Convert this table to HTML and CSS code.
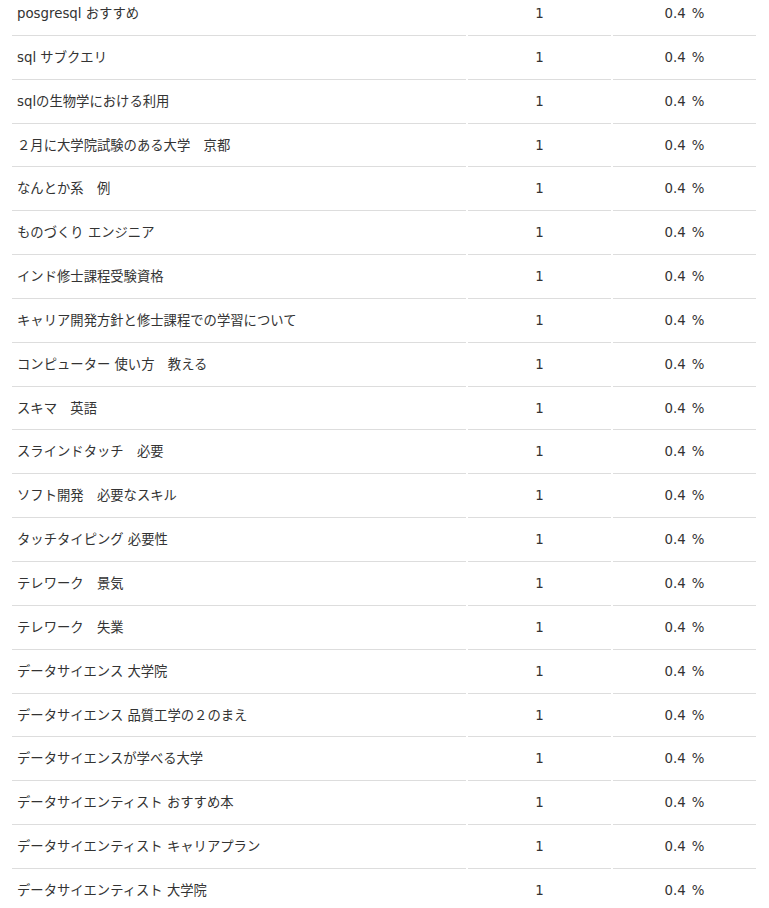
FILE: index.html
```html
<!DOCTYPE html>
<html lang="ja">
<head>
<meta charset="utf-8">
<link rel="stylesheet" href="styles.css">
</head>
<body>
<table class="ranking">
<tbody>
<tr><td class="kw">posgresql おすすめ</td><td class="num">1</td><td class="pct">0.4 %</td></tr>
<tr><td class="kw">sql サブクエリ</td><td class="num">1</td><td class="pct">0.4 %</td></tr>
<tr><td class="kw">sqlの生物学における利用</td><td class="num">1</td><td class="pct">0.4 %</td></tr>
<tr><td class="kw">２月に大学院試験のある大学　京都</td><td class="num">1</td><td class="pct">0.4 %</td></tr>
<tr><td class="kw">なんとか系　例</td><td class="num">1</td><td class="pct">0.4 %</td></tr>
<tr><td class="kw">ものづくり エンジニア</td><td class="num">1</td><td class="pct">0.4 %</td></tr>
<tr><td class="kw">インド修士課程受験資格</td><td class="num">1</td><td class="pct">0.4 %</td></tr>
<tr><td class="kw">キャリア開発方針と修士課程での学習について</td><td class="num">1</td><td class="pct">0.4 %</td></tr>
<tr><td class="kw">コンピューター 使い方　教える</td><td class="num">1</td><td class="pct">0.4 %</td></tr>
<tr><td class="kw">スキマ　英語</td><td class="num">1</td><td class="pct">0.4 %</td></tr>
<tr><td class="kw">スラインドタッチ　必要</td><td class="num">1</td><td class="pct">0.4 %</td></tr>
<tr><td class="kw">ソフト開発　必要なスキル</td><td class="num">1</td><td class="pct">0.4 %</td></tr>
<tr><td class="kw">タッチタイピング 必要性</td><td class="num">1</td><td class="pct">0.4 %</td></tr>
<tr><td class="kw">テレワーク　景気</td><td class="num">1</td><td class="pct">0.4 %</td></tr>
<tr><td class="kw">テレワーク　失業</td><td class="num">1</td><td class="pct">0.4 %</td></tr>
<tr><td class="kw">データサイエンス 大学院</td><td class="num">1</td><td class="pct">0.4 %</td></tr>
<tr><td class="kw">データサイエンス 品質工学の２のまえ</td><td class="num">1</td><td class="pct">0.4 %</td></tr>
<tr><td class="kw">データサイエンスが学べる大学</td><td class="num">1</td><td class="pct">0.4 %</td></tr>
<tr><td class="kw">データサイエンティスト おすすめ本</td><td class="num">1</td><td class="pct">0.4 %</td></tr>
<tr><td class="kw">データサイエンティスト キャリアプラン</td><td class="num">1</td><td class="pct">0.4 %</td></tr>
<tr><td class="kw">データサイエンティスト 大学院</td><td class="num">1</td><td class="pct">0.4 %</td></tr>
</tbody>
</table>
</body>
</html>
```
FILE: styles.css
```css
html, body {
  margin: 0;
  padding: 0;
  background: #fff;
}
body {
  padding: 0 11px 0 10px;
  font-family: "DejaVu Sans", Verdana, "Noto Sans CJK JP", sans-serif;
  font-size: 13.33px;
  line-height: 20.85px;
  color: #333;
}
.ranking {
  width: 100%;
  margin-top: -8px;
  border-collapse: separate;
  border-spacing: 2px;
}
.ranking td {
  padding: 10px 5px;
  border-bottom: 1px solid #ddd;
  vertical-align: middle;
}
.ranking .kw {
  width: 444px;
  text-align: left;
}
.ranking .num {
  width: 133px;
  text-align: center;
}
.ranking .pct {
  text-align: center;
  word-spacing: 2px;
}
```
